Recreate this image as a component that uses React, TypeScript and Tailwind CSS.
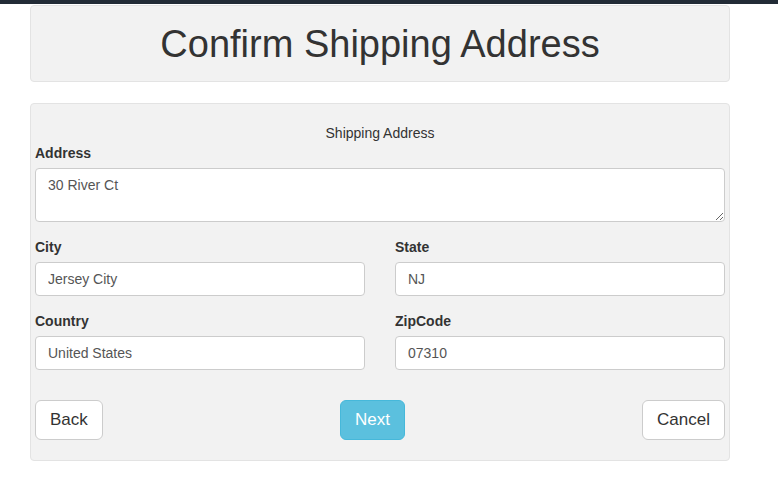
const fields = [
  [
    { label: 'City', value: 'Jersey City' },
    { label: 'State', value: 'NJ' },
  ],
  [
    { label: 'Country', value: 'United States' },
    { label: 'ZipCode', value: '07310' },
  ],
]

function Field({ label, value }: { label: string; value: string }) {
  return (
    <div className="flex flex-col">
      <label className="mb-[5px] text-[14px] leading-[20px] font-bold text-[#333]">{label}</label>
      <input
        defaultValue={value}
        className="h-[34px] w-full rounded-[4px] border border-[#ccc] bg-white px-3 text-[14px] text-[#555] outline-none"
      />
    </div>
  )
}

export default function App() {
  return (
    <div className="min-h-[494px] bg-white font-['Liberation_Sans',Arial,sans-serif] text-[#333]">
      <div className="h-1 bg-[#222b36]" />
      <div className="mx-[30px] mt-[1px] w-[700px]">
        <div className="flex h-[77px] items-center justify-center rounded-[4px] border border-[#e3e3e3] bg-[#f2f2f2]">
          <h1 className="text-[38px] leading-none font-normal text-[#333]">Confirm Shipping Address</h1>
        </div>

        <div className="mt-[21px] rounded-[4px] border border-[#e3e3e3] bg-[#f2f2f2] px-[4px] pt-[19px] pb-[20px]">
          <p className="text-center text-[14px] leading-[20px]">Shipping Address</p>
          <div className="mb-[15px] flex flex-col">
            <label className="mb-[5px] text-[14px] leading-[20px] font-bold">Address</label>
            <textarea
              defaultValue="30 River Ct"
              className="h-[54px] w-full rounded-[4px] border border-[#ccc] bg-white px-3 py-[6px] text-[14px] leading-[20px] text-[#555] outline-none"
            />
          </div>
          {fields.map((row, i) => (
            <div key={i} className="mb-[15px] grid grid-cols-2 gap-[30px]">
              {row.map((f) => (
                <Field key={f.label} {...f} />
              ))}
            </div>
          ))}
          <div className="mt-[30px] flex items-center justify-between">
            <button className="h-10 rounded-[6px] border border-[#ccc] bg-white px-[14px] text-[17px] text-[#333]">Back</button>
            <button className="h-10 rounded-[6px] border border-[#46b8da] bg-[#5bc0de] px-[14px] text-[17px] text-white">Next</button>
            <button className="h-10 rounded-[6px] border border-[#ccc] bg-white px-[14px] text-[17px] text-[#333]">Cancel</button>
          </div>
        </div>
      </div>
    </div>
  )
}
